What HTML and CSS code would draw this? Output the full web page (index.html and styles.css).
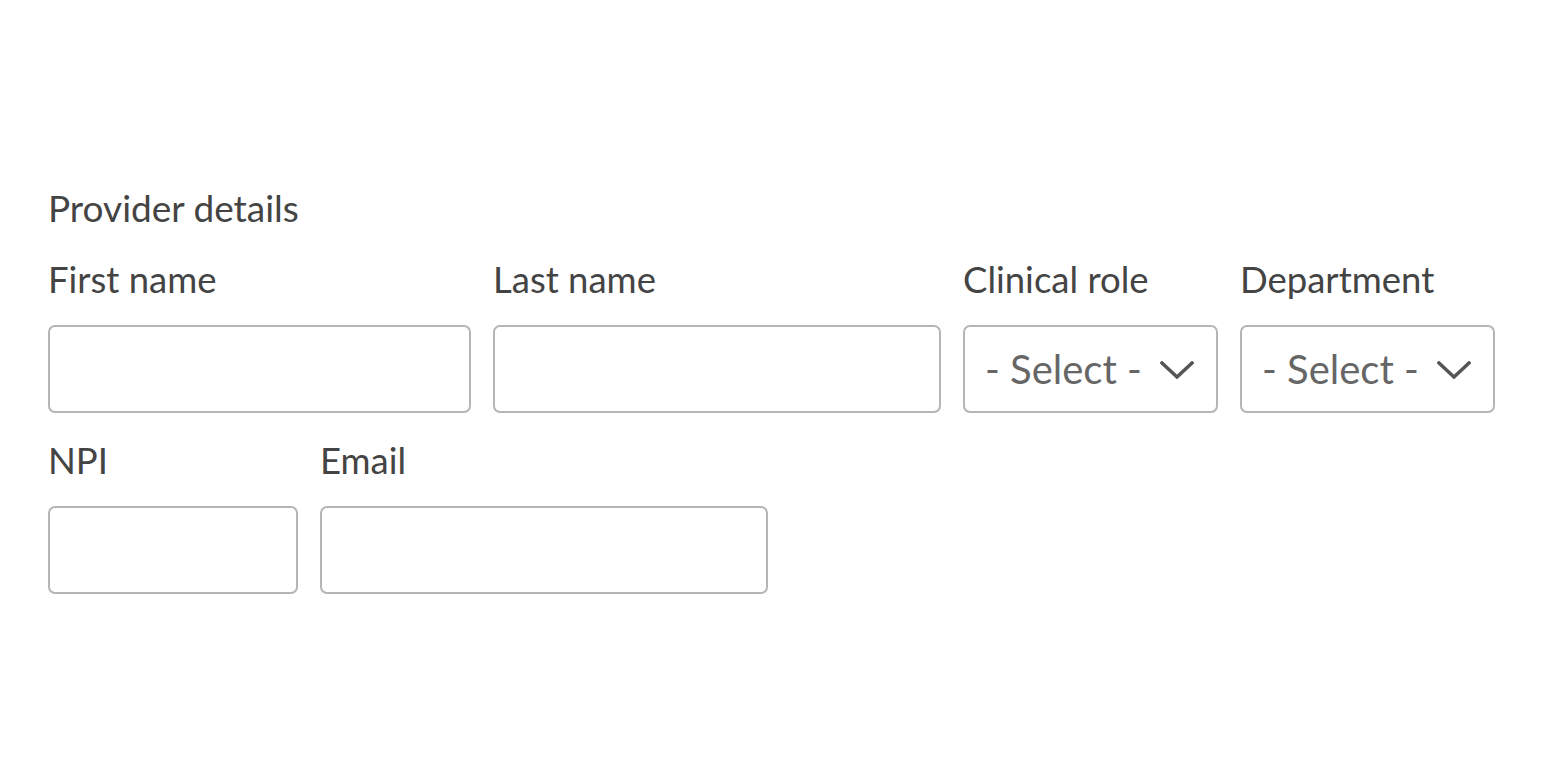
FILE: index.html
```html
<!DOCTYPE html>
<html lang="en">
<head>
<meta charset="utf-8">
<title>Provider details</title>
<link rel="stylesheet" href="styles.css">
</head>
<body>
<form class="form">
  <h2 class="section-title">Provider details</h2>
  <div class="row">
    <div class="field w-first">
      <label class="label">First name</label>
      <div class="input"></div>
    </div>
    <div class="field w-last">
      <label class="label">Last name</label>
      <div class="input"></div>
    </div>
    <div class="field w-select">
      <label class="label">Clinical role</label>
      <div class="input select">
        <span class="select-text">- Select -</span>
        <svg class="chevron" width="34" height="18" viewBox="0 0 34 18"><polyline points="2,2 17,16 32,2" fill="none" stroke="#555" stroke-width="3.5" stroke-linecap="square"/></svg>
      </div>
    </div>
    <div class="field w-select">
      <label class="label">Department</label>
      <div class="input select">
        <span class="select-text">- Select -</span>
        <svg class="chevron" width="34" height="18" viewBox="0 0 34 18"><polyline points="2,2 17,16 32,2" fill="none" stroke="#555" stroke-width="3.5" stroke-linecap="square"/></svg>
      </div>
    </div>
  </div>
  <div class="row">
    <div class="field w-npi">
      <label class="label">NPI</label>
      <div class="input"></div>
    </div>
    <div class="field w-last">
      <label class="label">Email</label>
      <div class="input"></div>
    </div>
  </div>
</form>
</body>
</html>
```
FILE: styles.css
```css
html, body {
  margin: 0;
  background: #fff;
}
body {
  font-family: Lato, "Open Sans", sans-serif;
  color: #444;
}
.form {
  padding: 186px 0 0 48px;
  display: flex;
  flex-direction: column;
  gap: 25px;
}
.section-title {
  margin: 0 0 2px 0;
  font-size: 37px;
  font-weight: 400;
  line-height: 44px;
  color: #444;
}
.row {
  display: flex;
  gap: 22px;
}
.field {
  display: flex;
  flex-direction: column;
}
.label {
  font-size: 36.5px;
  line-height: 44px;
  margin-bottom: 24px;
  color: #444;
  white-space: nowrap;
}
.input {
  box-sizing: border-box;
  height: 88px;
  border: 2px solid #b5b5b5;
  border-radius: 7px;
  background: #fff;
}
.w-first { width: 423px; }
.w-last { width: 448px; }
.w-select { width: 255px; }
.w-npi { width: 250px; }
.select {
  display: flex;
  align-items: center;
  justify-content: space-between;
  padding: 0 22px 0 20px;
}
.select-text {
  font-size: 40px;
  color: #666;
  white-space: nowrap;
}
.chevron {
  flex: none;
  margin-top: 1px;
}
```
